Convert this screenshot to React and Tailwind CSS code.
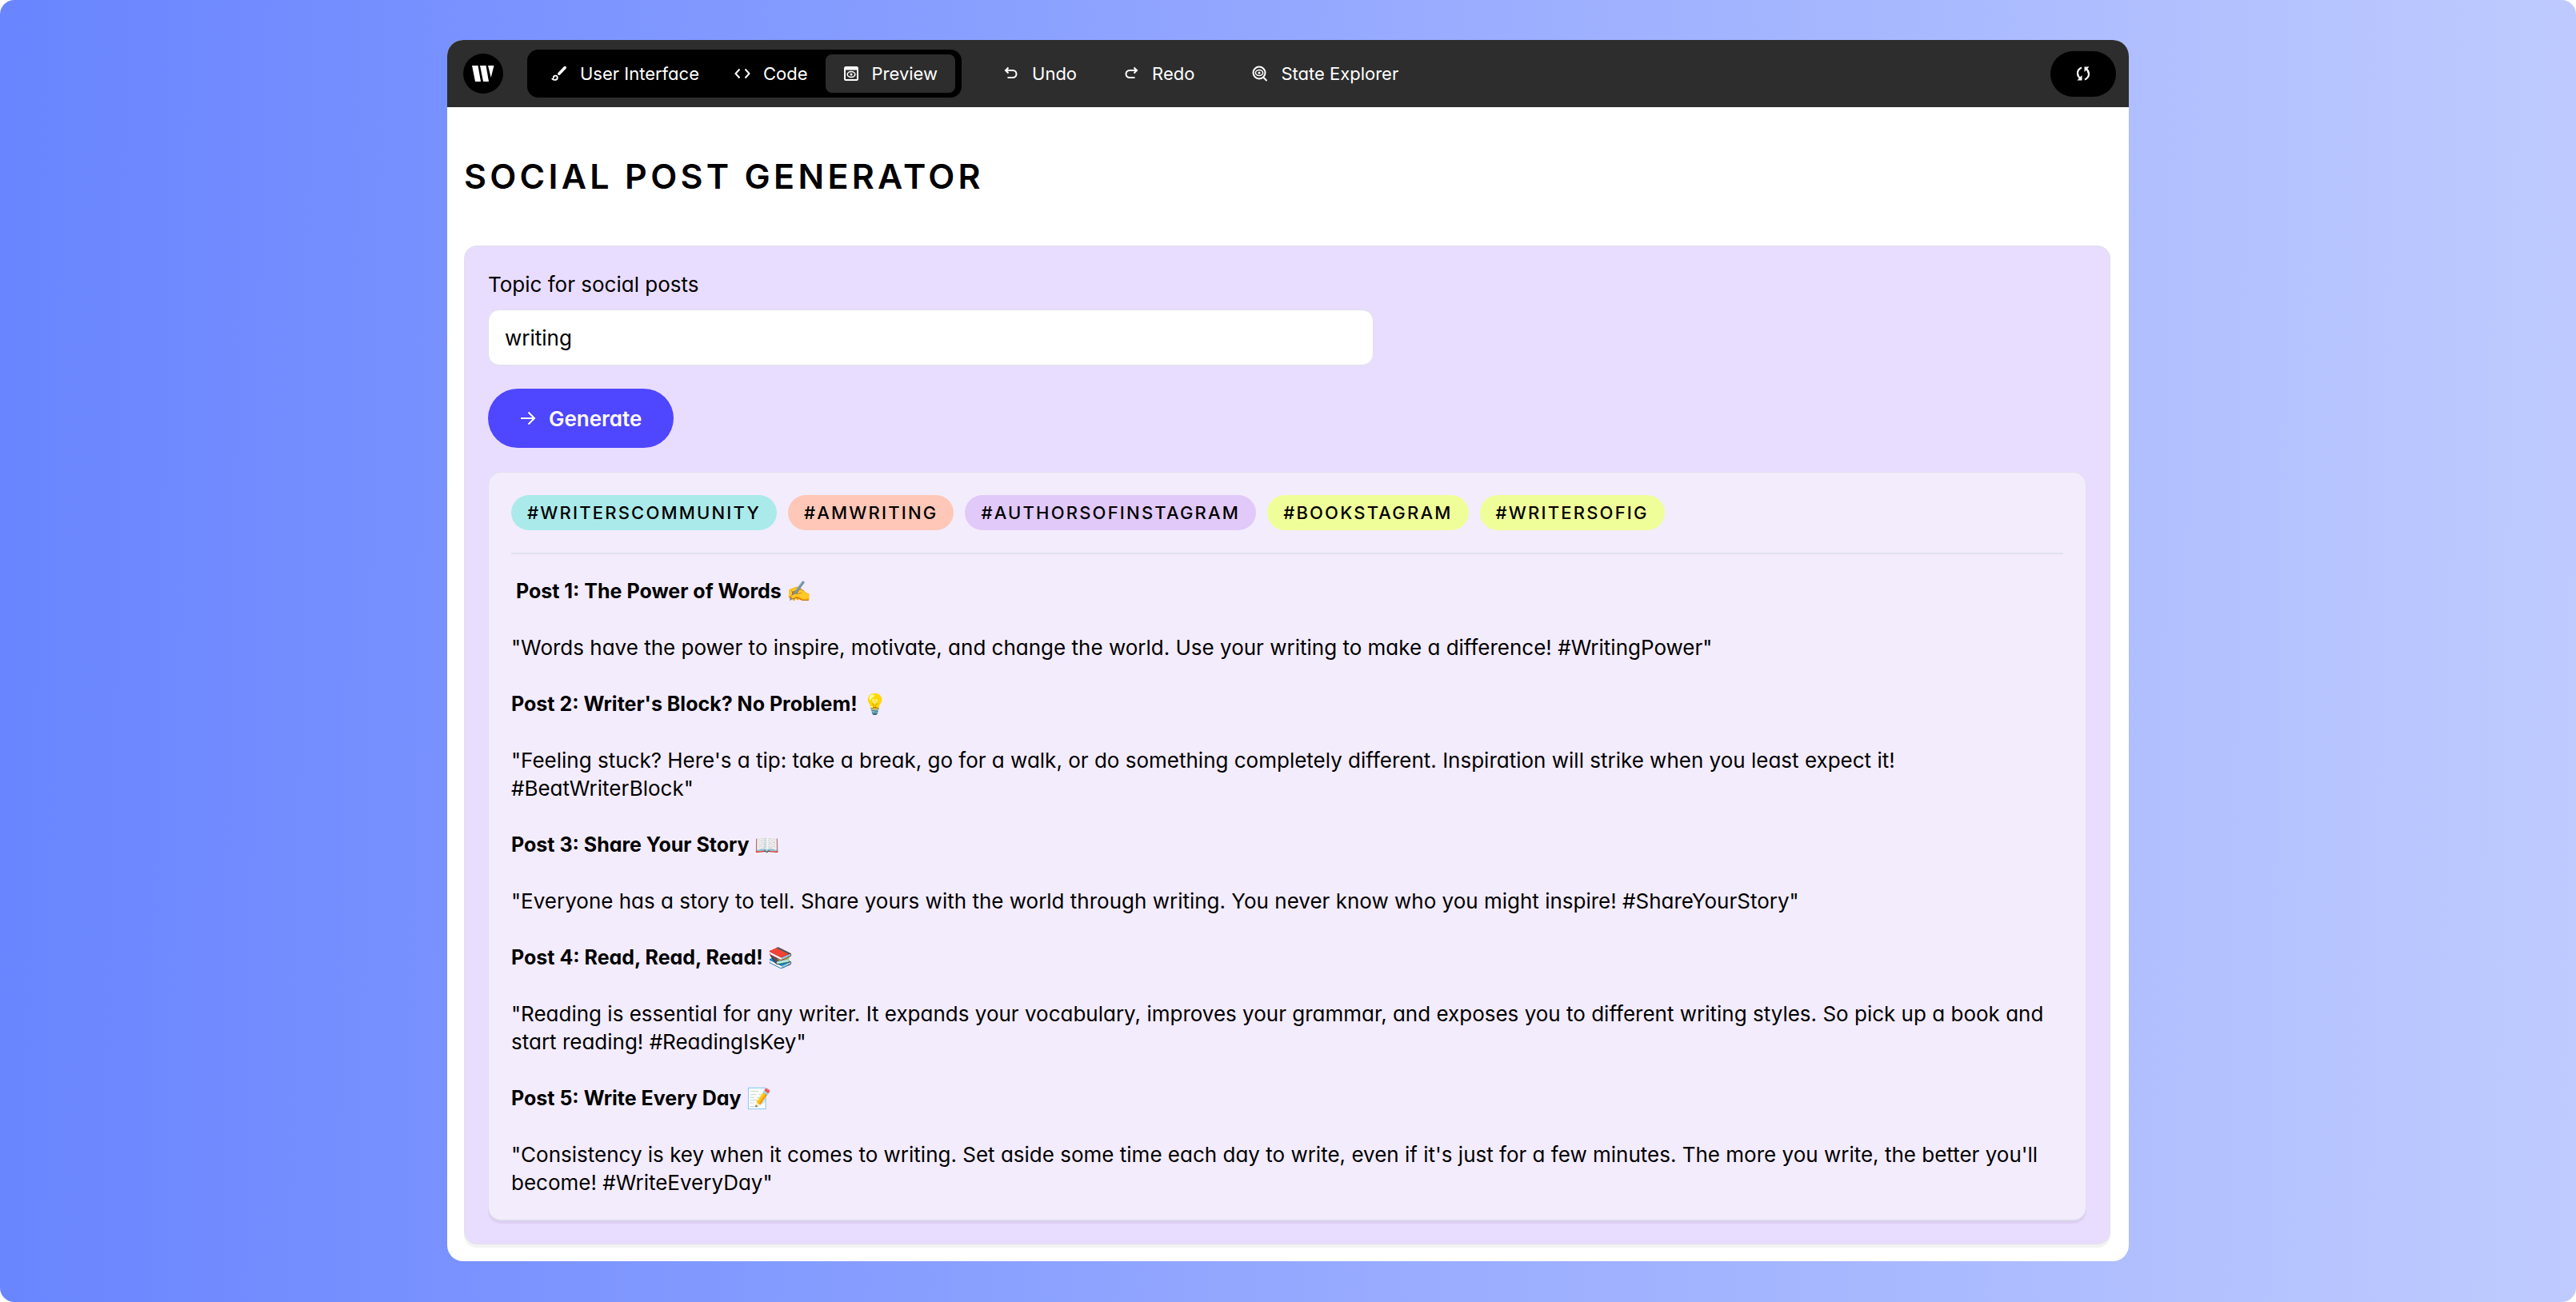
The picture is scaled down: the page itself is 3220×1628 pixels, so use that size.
import React from "react";

const tags = [
  ["#WRITERSCOMMUNITY", "bg-[#abeaea]"],
  ["#AMWRITING", "bg-[#ffc7b7]"],
  ["#AUTHORSOFINSTAGRAM", "bg-[#e1c9f9]"],
  ["#BOOKSTAGRAM", "bg-[#f0fe99]"],
  ["#WRITERSOFIG", "bg-[#f0fe99]"],
];

const posts = [
  ["\u00a0Post 1: The Power of Words", "✍️", "\"Words have the power to inspire, motivate, and change the world. Use your writing to make a difference! #WritingPower\""],
  ["Post 2: Writer's Block? No Problem!", "💡", "\"Feeling stuck? Here's a tip: take a break, go for a walk, or do something completely different. Inspiration will strike when you least expect it! #BeatWriterBlock\""],
  ["Post 3: Share Your Story", "📖", "\"Everyone has a story to tell. Share yours with the world through writing. You never know who you might inspire! #ShareYourStory\""],
  ["Post 4: Read, Read, Read!", "📚", "\"Reading is essential for any writer. It expands your vocabulary, improves your grammar, and exposes you to different writing styles. So pick up a book and start reading! #ReadingIsKey\""],
  ["Post 5: Write Every Day", "📝", "\"Consistency is key when it comes to writing. Set aside some time each day to write, even if it's just for a few minutes. The more you write, the better you'll become! #WriteEveryDay\""],
];

function Icon({ children, className = "size-5" }) {
  return (
    <svg viewBox="0 0 20 20" className={className} fill="none" stroke="currentColor" strokeWidth="2" aria-hidden="true">
      {children}
    </svg>
  );
}

function BrushIcon() {
  return (
    <Icon>
      <path d="M17.2 2.6 L9.8 10.200" strokeWidth="3.6" strokeLinecap="round" />
      <path d="M5.2 12.6c1.700 0 2.600 1 2.600 2.300 0 1.900-1.700 3-3.600 3-1.100 0-2-.4-2.600-1 .9-.3 1.100-.9 1.200-1.900.1-1.400 1-2.400 2.400-2.400z" strokeWidth="1.800" />
    </Icon>
  );
}

function CodeIcon() {
  return (
    <Icon>
      <path d="M6.500 4.500 1.500 10l5 5.500M13.500 4.500l5 5.500-5 5.500" />
    </Icon>
  );
}

function PreviewIcon() {
  return (
    <Icon>
      <rect x="2" y="2" width="16" height="16" rx="1.500" />
      <path d="M2 4h16" strokeWidth="3" />
      <ellipse cx="10" cy="11" rx="4.800" ry="3.500" strokeWidth="1.600" />
      <circle cx="10" cy="11" r="1.500" fill="currentColor" stroke="none" />
    </Icon>
  );
}

function UndoIcon({ className = "size-5" }) {
  return (
    <Icon className={className}>
      <path d="M6.500 2.500 3 6l3.500 3.500M3.500 6H12a4.500 4.500 0 0 1 0 9H5.500" />
    </Icon>
  );
}

function StateIcon() {
  return (
    <Icon>
      <circle cx="9" cy="9" r="7.500" />
      <path d="M14 14.500l4.500 4.500" />
      <ellipse cx="9" cy="9" rx="4.600" ry="3.500" strokeWidth="1.600" />
      <circle cx="9" cy="9" r="1.600" fill="currentColor" stroke="none" />
    </Icon>
  );
}

function SyncIcon() {
  return (
    <Icon>
      <path d="M8 2.500C4.500 4 3 6.500 3 9.500c0 2.800 1.400 5 3.500 6.500M12 17.500c3.500-1.500 5-4 5-7 0-2.800-1.400-5-3.500-6.500" strokeWidth="2.200" />
      <path d="M2.500 18.500H8.500V12zM17.500 1.500H11.500V8z" fill="currentColor" stroke="none" />
    </Icon>
  );
}

function ToolButton({ icon, children, className = "" }) {
  return (
    <button type="button" className={`flex h-12 items-center gap-4 rounded-lg whitespace-nowrap ${className}`}>
      {icon}
      <span>{children}</span>
    </button>
  );
}

export default function App() {
  return (
    <div className="min-h-screen bg-white font-['Inter','Noto_Sans',sans-serif] text-black [font-feature-settings:'cv11']">
      <div className="min-h-screen rounded-[18px] bg-linear-[91deg,#6985ff,#bfcbff] px-[17.36%] py-[50px]">
        <div className="overflow-hidden rounded-[20px] bg-white">
          <header className="flex h-[84px] items-center bg-[#2d2d2d] px-5 text-[22px] text-white">
            <div className="flex size-[50px] shrink-0 items-center justify-center rounded-full bg-black">
              <svg viewBox="0 0 28 20" className="h-5 w-7" fill="white" aria-label="Writer">
                <path d="M0 0h7.500l3.500 20H4zM10 0h7.500l3.500 20h-7zM20 0h7.500l-3.800 15z" />
              </svg>
            </div>
            <nav className="ml-[30px] flex h-[60px] items-center rounded-[14px] bg-black px-2">
              <ToolButton icon={<BrushIcon />} className="px-[22px]">User Interface</ToolButton>
              <ToolButton icon={<CodeIcon />} className="px-[22px]">Code</ToolButton>
              <ToolButton icon={<PreviewIcon />} className="bg-[#2d2d2d] px-[22px]">Preview</ToolButton>
            </nav>
            <div className="ml-[52px] flex items-center">
              <ToolButton icon={<UndoIcon />}>Undo</ToolButton>
              <ToolButton icon={<UndoIcon className="size-5 -scale-x-100" />} className="ml-[58px]">Redo</ToolButton>
              <ToolButton icon={<StateIcon />} className="ml-[72px]">State Explorer</ToolButton>
            </div>
            <button type="button" aria-label="Refresh" className="-mr-1 ml-auto flex h-[57px] w-[82px] items-center justify-center rounded-full bg-black">
              <SyncIcon />
            </button>
          </header>
          <main className="pr-[23px] pb-[21px] pl-[21px]">
            <h1 className="pt-[58px] pb-[59px] text-[43px] leading-[56px] font-semibold tracking-widest">SOCIAL POST GENERATOR</h1>
            <section className="rounded-2xl border border-[#e0e0ea] bg-[#e8ddff] px-[29px] pt-[30px] pb-[29px] text-[26px] leading-[35px] shadow-[0_4px_0_#0000000d]">
              <label htmlFor="topic" className="block">Topic for social posts</label>
              <input id="topic" type="text" defaultValue="writing" className="mt-[14px] block h-[70px] w-[55.4%] rounded-[14px] border border-[#e0e0ea] bg-white px-5 outline-none" />
              <button type="button" className="mt-[29px] flex h-[74px] items-center gap-4 rounded-full bg-[#4f46ff] px-10 font-semibold text-white">
                <Icon><path d="M1 10h17M10.500 2.500 18 10l-7.500 7.500" /></Icon>
                Generate
              </button>
              <div className="mt-[30px] rounded-2xl border border-[#e0e0ea] bg-[#f3ecfd] px-7 pt-7 pb-[29px] shadow-[0_4px_0_#0000000d]">
                <ul className="flex gap-3.5 border-b-2 border-[#e0e0ee] pb-7 text-[22px] font-medium tracking-widest">
                  {tags.map(([name, color]) => (
                    <li key={name} className={`flex h-11 items-center rounded-full px-5 ${color}`}>{name}</li>
                  ))}
                </ul>
                <div className="mt-[29px] flex flex-col gap-9">
                  {posts.map(([title, emoji, body]) => (
                    <article key={title} className="flex flex-col gap-[35px]">
                      <h2 className="text-[25px] font-bold">{title} {emoji}</h2>
                      <p>{body}</p>
                    </article>
                  ))}
                </div>
              </div>
            </section>
          </main>
        </div>
      </div>
    </div>
  );
}
